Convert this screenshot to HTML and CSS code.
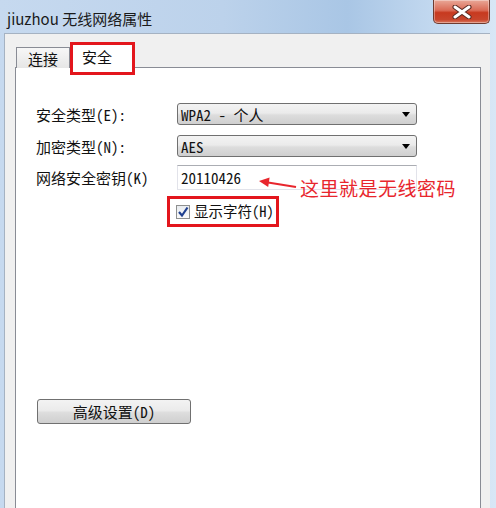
FILE: index.html
```html
<!DOCTYPE html>
<html lang="zh-CN">
<head>
<meta charset="utf-8">
<title>jiuzhou 无线网络属性</title>
<link rel="stylesheet" href="styles.css">
</head>
<body>
<div class="window">
  <div class="titlebar">
    <span class="title">jiuzhou 无线网络属性</span>
    <div class="close">
      <svg width="20" height="14" viewBox="0 0 20 14">
        <path d="M3 2 L17 12 M17 2 L3 12" stroke="#5a2a22" stroke-width="5" stroke-linecap="round"/>
        <path d="M3 2 L17 12 M17 2 L3 12" stroke="#ffffff" stroke-width="3" stroke-linecap="round"/>
      </svg>
    </div>
  </div>
  <div class="client">
    <div class="tabs">
      <div class="tab">连接</div>
      <div class="tab active">安全</div>
    </div>
    <div class="panel">
      <div class="row">
        <span class="lbl">安全类型(E):</span>
        <div class="combo"><span>WPA2 - 个人</span><i class="arrow"></i></div>
      </div>
      <div class="row">
        <span class="lbl">加密类型(N):</span>
        <div class="combo"><span>AES</span><i class="arrow"></i></div>
      </div>
      <div class="row row-key">
        <span class="lbl">网络安全密钥(K)</span>
        <div class="textbox">20110426</div>
      </div>
      <div class="show">
        <span class="check">
          <svg width="12" height="12" viewBox="0 0 12 12">
            <path d="M2 6 L5 9.5 L10.5 1.5" fill="none" stroke="#1f3f8f" stroke-width="2.2"/>
          </svg>
        </span>
        <span class="show-text">显示字符(H)</span>
      </div>
      <div class="btn">高级设置(D)</div>

      <svg class="ann-arrow" width="40" height="14" viewBox="0 0 40 14">
        <polygon points="1,5 11.6,1.6 10.2,11" fill="#e8262d"/>
        <line x1="10" y1="6.5" x2="38" y2="11" stroke="#e8262d" stroke-width="2"/>
      </svg>
      <div class="ann-text">这里就是无线密码</div>
    </div>
  </div>
</div>
</body>
</html>
```
FILE: styles.css
```css
html, body {
  margin: 0;
  padding: 0;
}
body {
  width: 496px;
  height: 508px;
  overflow: hidden;
  background: #c3d7ee;
}
.window {
  width: 496px;
  height: 508px;
  display: flex;
  flex-direction: column;
  background: linear-gradient(90deg, #c6d9ef 0%, #bcd2eb 45%, #a9c6e5 70%, #c9ddf2 92%, #d8e7f6 100%);
}
.titlebar {
  height: 33px;
  flex: none;
  display: flex;
  align-items: flex-start;
  padding-left: 7px;
  padding-right: 6px;
}
.title {
  font-family: "Noto Sans CJK SC", sans-serif;
  font-size: 15px;
  line-height: 20px;
  margin-top: 9px;
  color: #1a1a1a;
}
.close {
  margin-left: auto;
  width: 55px;
  height: 23px;
  border: 1px solid #6e3b30;
  border-top: none;
  border-radius: 0 0 5px 5px;
  background: linear-gradient(180deg, #e9a898 0%, #da6a55 45%, #c7391f 55%, #c8452c 85%, #d9785f 100%);
  display: flex;
  align-items: center;
  justify-content: center;
  box-shadow: inset 0 0 0 1px rgba(255,255,255,0.35);
}
.client {
  flex: 1;
  margin: 0 6px 0 4px;
  background: #f0f0f0;
  border-left: 1px solid #a5b2c2;
  border-top: 1px solid #a5b2c2;
  padding: 10px 9px 0 10px;
  display: flex;
  flex-direction: column;
  position: relative;
}
.tabs {
  height: 24px;
  display: flex;
  align-items: flex-end;
  margin-bottom: -1px;
  position: relative;
  z-index: 1;
  font-family: "Noto Sans Mono CJK SC", "Noto Sans CJK SC", sans-serif;
  font-size: 15px;
}
.tab {
  box-sizing: border-box;
  height: 21px;
  width: 54px;
  margin-left: 1px;
  border: 1px solid #898c95;
  border-bottom: none;
  background: linear-gradient(180deg, #f7f7f7, #e6e6e6);
  display: flex;
  align-items: center;
  justify-content: center;
  color: #111;
  line-height: 1;
}
.tab.active {
  height: 24px;
  width: 61px;
  margin-left: 2px;
  background: #ffffff;
  position: relative;
  justify-content: flex-start;
  padding-left: 9px;
  padding-bottom: 1px;
}
.tab.active::after {
  content: "";
  position: absolute;
  left: -3px;
  right: -3px;
  top: -3px;
  bottom: -7px;
  border: 3px solid #e3161c;
}
.panel {
  flex: 1;
  background: #ffffff;
  border: 1px solid #898c95;
  border-bottom: none;
  padding: 35px 0 0 20px;
  position: relative;
  font-family: "Noto Sans Mono CJK SC", "Noto Sans CJK SC", sans-serif;
  font-size: 15px;
  color: #111;
}
.row {
  display: flex;
  align-items: center;
  height: 22px;
  margin-bottom: 10px;
}
.row-key {
  height: 25px;
  margin-top: -2px;
  margin-bottom: 0;
}
.lbl {
  width: 141px;
  flex: none;
  white-space: nowrap;
  line-height: 1;
}
.combo {
  box-sizing: border-box;
  width: 240px;
  height: 22px;
  border: 1px solid #707070;
  border-radius: 3px;
  background: linear-gradient(180deg, #f3f3f3 0%, #ebebeb 45%, #dddddd 55%, #cfcfcf 100%);
  display: flex;
  align-items: center;
  padding: 0 6px 0 3px;
  line-height: 1;
}
.arrow {
  margin-left: auto;
  width: 0;
  height: 0;
  border-left: 4px solid transparent;
  border-right: 4px solid transparent;
  border-top: 5px solid #000;
}
.textbox {
  box-sizing: border-box;
  width: 240px;
  height: 25px;
  border: 1px solid #e2e3ea;
  border-top-color: #abadb3;
  background: #fff;
  display: flex;
  align-items: center;
  padding-left: 3px;
  line-height: 1;
}
.show {
  box-sizing: border-box;
  margin: 6px 0 0 131px;
  width: 112px;
  height: 31px;
  border: 3px solid #e3161c;
  display: flex;
  align-items: center;
  padding-left: 6px;
  gap: 4px;
  line-height: 1;
  white-space: nowrap;
}
.show-text {
  font-size: 14.5px;
}
.check {
  box-sizing: border-box;
  flex: none;
  width: 14px;
  height: 14px;
  border: 1px solid #8e8f8f;
  background: linear-gradient(180deg, #e9ecf0, #f9f9f9);
  display: flex;
  align-items: center;
  justify-content: center;
}
.btn {
  box-sizing: border-box;
  margin: 172px 0 0 1px;
  width: 154px;
  height: 25px;
  border: 1px solid #707070;
  border-radius: 3px;
  background: linear-gradient(180deg, #f3f3f3 0%, #ebebeb 45%, #dddddd 55%, #cfcfcf 100%);
  display: flex;
  align-items: center;
  justify-content: center;
  line-height: 1;
}
.ann-arrow {
  position: absolute;
  left: 242px;
  top: 108px;
}
.ann-text {
  position: absolute;
  left: 284px;
  top: 109px;
  font-family: "Noto Sans CJK SC", sans-serif;
  font-size: 19px;
  line-height: 22px;
  letter-spacing: 0.5px;
  color: #e8262d;
  white-space: nowrap;
}
```
